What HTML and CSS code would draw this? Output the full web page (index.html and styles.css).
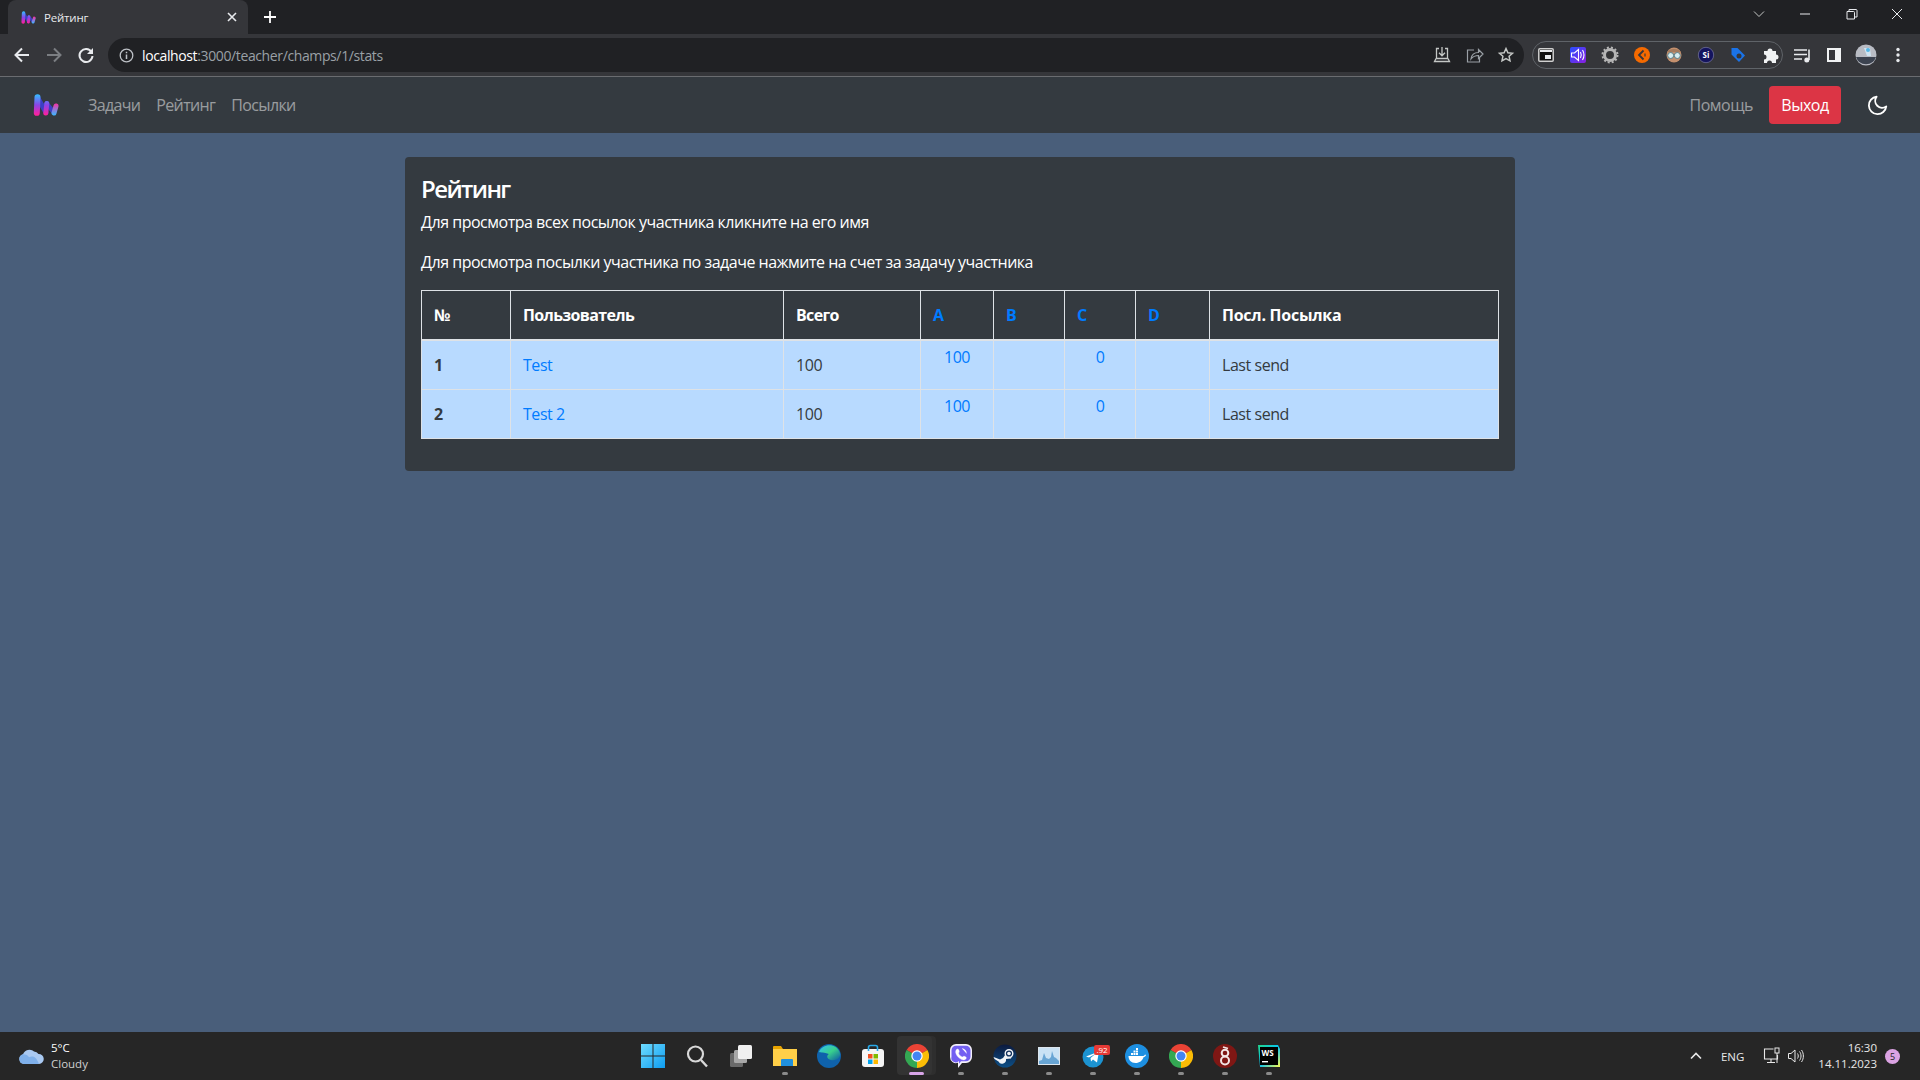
FILE: index.html
```html
<!DOCTYPE html>
<html lang="ru">

<head>
    <meta charset="UTF-8">
    <title>Рейтинг</title>
    <link rel="stylesheet" href="styles.css">
</head>

<body>
    <svg class="defs" width="0" height="0">
        <defs>
            <linearGradient id="barA" gradientUnits="userSpaceOnUse" x1="0" y1="1" x2="0" y2="21">
                <stop offset="0" stop-color="#38b6ff" />
                <stop offset="0.5" stop-color="#8a45e8" />
                <stop offset="1" stop-color="#ff1f9c" />
            </linearGradient>
            <linearGradient id="barB" gradientUnits="userSpaceOnUse" x1="0" y1="9" x2="0" y2="21">
                <stop offset="0" stop-color="#ff2aa0" />
                <stop offset="1" stop-color="#3fb4ff" />
            </linearGradient>
            <linearGradient id="winBlue" x1="0" y1="0" x2="1" y2="1">
                <stop offset="0" stop-color="#6fdcff" />
                <stop offset="1" stop-color="#0d9cf0" />
            </linearGradient>
            <linearGradient id="edgeFill" x1="0" y1="0" x2="1" y2="1">
                <stop offset="0" stop-color="#35c1f1" />
                <stop offset="0.5" stop-color="#38d08c" />
                <stop offset="1" stop-color="#0c59a4" />
            </linearGradient>
            <linearGradient id="wsFill" x1="0" y1="0" x2="1" y2="1">
                <stop offset="0" stop-color="#21d789" />
                <stop offset="0.5" stop-color="#07c3f2" />
                <stop offset="1" stop-color="#fcf84a" />
            </linearGradient>
            <linearGradient id="voiceFill" x1="0" y1="0" x2="1" y2="1">
                <stop offset="0" stop-color="#2a4fff" />
                <stop offset="1" stop-color="#8a1fe0" />
            </linearGradient>
            <linearGradient id="steamFill" x1="0" y1="0" x2="0" y2="1">
                <stop offset="0" stop-color="#0c1a3e" />
                <stop offset="1" stop-color="#0d4f86" />
            </linearGradient>
            <symbol id="logo" viewBox="0 0 26 22">
                <path d="M4.500 3.500L13 18.500" stroke="#3b3fc4" stroke-width="5" stroke-linecap="round" fill="none" />
                <path d="M4.500 3.200L3.800 18.800" stroke="url(#barA)" stroke-width="6" stroke-linecap="round" fill="none" />
                <path d="M13.500 9.500L21 18.500" stroke="#3b3fc4" stroke-width="4.500" stroke-linecap="round" fill="none" />
                <path d="M13.800 9.500L12.800 19" stroke="url(#barA)" stroke-width="5" stroke-linecap="round" fill="none" />
                <path d="M23 12L21 19" stroke="url(#barB)" stroke-width="5" stroke-linecap="round" fill="none" />
            </symbol>
            <symbol id="chrome" viewBox="0 0 24 24">
                <path d="M12 12L1.600 6A12 12 0 0 1 22.400 6z" fill="#ea4335" />
                <path d="M12 12L22.400 6A12 12 0 0 1 12 24z" fill="#fbbc05" />
                <path d="M12 12L12 24A12 12 0 0 1 1.600 6z" fill="#34a853" />
                <circle cx="12" cy="12" r="5.700" fill="#fff" />
                <circle cx="12" cy="12" r="4.500" fill="#4285f4" />
            </symbol>
        </defs>
    </svg>

    <div class="tabstrip">
        <div class="tab">
            <svg class="favicon" width="15" height="13"><use href="#logo" /></svg>
            <span class="tab-title">Рейтинг</span>
            <svg class="tab-close" width="10" height="10" viewBox="0 0 10 10"><path d="M1 1l8 8M9 1l-8 8" stroke="#e8eaed" stroke-width="1.600" /></svg>
        </div>
        <svg class="new-tab" width="12" height="12" viewBox="0 0 12 12"><path d="M6 0v12M0 6h12" stroke="#fff" stroke-width="1.800" /></svg>
        <div class="window-controls">
            <svg width="46" height="12" viewBox="0 0 46 12"><path d="M18 3.500l5 5 5-5" fill="none" stroke="#c4c7c5" stroke-width="1" /></svg>
            <svg width="46" height="12" viewBox="0 0 46 12"><path d="M18 6h10" stroke="#e8eaed" stroke-width="1" /></svg>
            <svg width="46" height="12" viewBox="0 0 46 12"><path d="M19 3.500h6.500a1 1 0 0 1 1 1v6.500h-7.500z M21 3.500v-2h7a1 1 0 0 1 1 1v6.500h-2.500" fill="none" stroke="#e8eaed" stroke-width="1" /></svg>
            <svg width="46" height="12" viewBox="0 0 46 12"><path d="M18 1l10 10M28 1l-10 10" stroke="#e8eaed" stroke-width="1" /></svg>
        </div>
    </div>

    <div class="toolbar">
        <div class="nav-buttons">
            <svg width="32" height="20" viewBox="0 0 32 20"><path d="M23 10H10M16 3.500L9.500 10l6.500 6.500" fill="none" stroke="#e8eaed" stroke-width="2" /></svg>
            <svg width="32" height="20" viewBox="0 0 32 20"><path d="M9 10h13M16 3.500l6.500 6.500-6.500 6.500" fill="none" stroke="#7b7e82" stroke-width="2" /></svg>
            <svg width="32" height="20" viewBox="0 0 32 20"><path d="M21.500 7A6.500 6.500 0 1 0 22.500 11" fill="none" stroke="#e8eaed" stroke-width="2" /><path d="M23 3v6h-6z" fill="#e8eaed" /></svg>
        </div>
        <div class="address">
            <svg class="info" width="15" height="15" viewBox="0 0 15 15"><circle cx="7.500" cy="7.500" r="6.300" fill="none" stroke="#bdc1c6" stroke-width="1.300" /><path d="M7.500 6.500v4.500M7.500 3.800v1.500" stroke="#bdc1c6" stroke-width="1.500" /></svg>
            <span class="url"><span class="host">localhost</span>:3000/teacher/champs/1/stats</span>
            <div class="address-actions">
                <svg width="32" height="20" viewBox="0 0 32 20"><path d="M13 3.500H10.500v10h11v-10H19M16 2v8.500M13 7.800l3 3 3-3" fill="none" stroke="#c4c7c5" stroke-width="1.300" /><path d="M10 13.500l-1.500 3h15l-1.500-3" fill="none" stroke="#c4c7c5" stroke-width="1.300" /></svg>
                <svg width="32" height="20" viewBox="0 0 32 20"><path d="M16 5h-6.500v12h12v-4M13 14c.5-4 3-6.500 7.500-6.500V4.500l4.500 4.500-4.500 4.500v-3c-3 0-5.500 1-7.500 3.500z" fill="none" stroke="#9aa0a6" stroke-width="1.200" /></svg>
                <svg width="32" height="20" viewBox="0 0 32 20"><path d="M16 3.500l1.900 4.200 4.600.5-3.400 3.100.9 4.600-4-2.300-4 2.300.9-4.600-3.400-3.100 4.600-.5z" fill="none" stroke="#c4c7c5" stroke-width="1.500" /></svg>
            </div>
        </div>
        <div class="extensions">
            <svg width="32" height="20" viewBox="0 0 32 20"><rect x="8.800" y="3.800" width="14.400" height="12.400" rx="1" fill="#111" stroke="#d0d0d0" stroke-width="1.500" /><rect x="10" y="5" width="12" height="2" fill="#e8eaed" /><rect x="15" y="10" width="6" height="4" fill="#e8eaed" /></svg>
            <svg width="32" height="20" viewBox="0 0 32 20"><rect x="8" y="2" width="16" height="16" rx="2" fill="url(#voiceFill)" /><path d="M9.500 8v4h3l4 3.500v-11l-4 3.500zM18.500 7c1 2 1 4 0 6M20.500 5c1.800 3 1.800 7 0 10" fill="none" stroke="#fff" stroke-width="1.100" /></svg>
            <svg width="32" height="20" viewBox="0 0 32 20"><circle cx="16" cy="10" r="5.500" fill="none" stroke="#b5b5b5" stroke-width="3" /><circle cx="16" cy="10" r="7.500" fill="none" stroke="#b5b5b5" stroke-width="2" stroke-dasharray="2 2" /><circle cx="16" cy="10" r="2.500" fill="#333" /></svg>
            <svg width="32" height="20" viewBox="0 0 32 20"><circle cx="16" cy="10" r="8" fill="#f56a00" /><path d="M17.500 5.500L13 10l4.500 4.500" fill="none" stroke="#35363a" stroke-width="1.800" /><path d="M19 8.500v3" stroke="#35363a" stroke-width="1.200" /></svg>
            <svg width="32" height="20" viewBox="0 0 32 20"><circle cx="16" cy="10" r="7.500" fill="#c4906e" /><path d="M9 7c2-4 12-4 14 0z" fill="#a57b5d" /><circle cx="12.700" cy="10.500" r="3" fill="#d8eef0" stroke="#5a7f88" /><circle cx="19.300" cy="10.500" r="3" fill="#d8eef0" stroke="#5a7f88" /></svg>
            <svg width="32" height="20" viewBox="0 0 32 20"><circle cx="16" cy="10" r="7.700" fill="#14145e" stroke="#8a8ab0" stroke-width=".6" /><text class="si" x="16" y="13" text-anchor="middle">Si</text></svg>
            <svg width="32" height="20" viewBox="0 0 32 20"><path d="M9.500 3h6l7.500 7.500-6 6.500-7.500-7.500z" fill="#1a73e8" /><circle cx="17" cy="11" r="2.500" fill="#35363a" /></svg>
            <svg width="32" height="20" viewBox="0 0 32 20"><path d="M10 6h3.500a2.500 2.500 0 1 1 5 0H22v3.500a2.500 2.500 0 1 1 0 5V18H18a2.500 2.500 0 1 0-5 0h-3v-3.500a2.500 2.500 0 1 0 0-5z" fill="#f1f3f4" /></svg>
        </div>
        <div class="toolbar-end">
            <svg width="32" height="20" viewBox="0 0 32 20"><path d="M8 5h13M8 9.500h13M8 14h8" stroke="#e8eaed" stroke-width="1.600" /><path d="M23 4.500V15" stroke="#e8eaed" stroke-width="1.600" /><circle cx="20.800" cy="15" r="2.500" fill="#e8eaed" /></svg>
            <svg width="32" height="20" viewBox="0 0 32 20"><path d="M9 3h14v14H9z" fill="#f1f3f4" /><path d="M11 5h6v10h-6z" fill="#35363a" /></svg>
            <svg width="32" height="24" viewBox="0 0 32 24"><circle cx="16" cy="12" r="10.500" fill="#b9bcc4" /><path d="M6 14h20a10.500 10.500 0 0 1-20 0z" fill="#3c4350" /><path d="M14 5h6l1 8h-4z" fill="#cfe4f2" /><circle cx="18" cy="7" r="2" fill="#55b6e6" /></svg>
            <svg width="32" height="20" viewBox="0 0 32 20"><circle cx="16" cy="4.500" r="1.700" fill="#e8eaed" /><circle cx="16" cy="10" r="1.700" fill="#e8eaed" /><circle cx="16" cy="15.500" r="1.700" fill="#e8eaed" /></svg>
        </div>
    </div>

    <nav class="navbar">
        <svg class="brand" width="26" height="22"><use href="#logo" /></svg>
        <a class="nav-link" href="#">Задачи</a>
        <a class="nav-link" href="#">Рейтинг</a>
        <a class="nav-link" href="#">Посылки</a>
        <a class="nav-link nav-help" href="#">Помощь</a>
        <button class="logout">Выход</button>
        <svg class="moon" width="22" height="22" viewBox="0 0 24 24"><path d="M21 13.500A9.500 9.500 0 1 1 10.500 3a7.500 7.500 0 0 0 10.500 10.500z" fill="none" stroke="#fff" stroke-width="2" stroke-linejoin="round" /></svg>
    </nav>

    <main class="page">
        <div class="card">
            <h4>Рейтинг</h4>
            <p>Для просмотра всех посылок участника кликните на его имя</p>
            <p>Для просмотра посылки участника по задаче нажмите на счет за задачу участника</p>
            <table class="rating">
                <colgroup>
                    <col class="c-num">
                    <col class="c-user">
                    <col class="c-total">
                    <col class="c-a">
                    <col class="c-b">
                    <col class="c-c">
                    <col class="c-d">
                    <col class="c-last">
                </colgroup>
                <thead>
                    <tr>
                        <th>№</th>
                        <th>Пользователь</th>
                        <th>Всего</th>
                        <th><a href="#">A</a></th>
                        <th><a href="#">B</a></th>
                        <th><a href="#">C</a></th>
                        <th><a href="#">D</a></th>
                        <th>Посл. Посылка</th>
                    </tr>
                </thead>
                <tbody>
                    <tr>
                        <td class="place">1</td>
                        <td><a href="#">Test</a></td>
                        <td>100</td>
                        <td class="score"><a href="#">100</a></td>
                        <td class="score"></td>
                        <td class="score"><a href="#">0</a></td>
                        <td class="score"></td>
                        <td>Last send</td>
                    </tr>
                    <tr>
                        <td class="place">2</td>
                        <td><a href="#">Test 2</a></td>
                        <td>100</td>
                        <td class="score"><a href="#">100</a></td>
                        <td class="score"></td>
                        <td class="score"><a href="#">0</a></td>
                        <td class="score"></td>
                        <td>Last send</td>
                    </tr>
                </tbody>
            </table>
        </div>
    </main>

    <footer class="taskbar">
        <div class="weather">
            <svg width="26" height="18" viewBox="0 0 26 18"><path d="M6 17a5 5 0 0 1-1-9.800A7 7 0 0 1 16 4.500 5.500 5.500 0 0 1 20.500 7 5 5 0 0 1 21 17z" fill="#a9c9f2" /><path d="M6 17a5 5 0 0 1-1-9.800c3 0 5 1 6 3 3-1.500 7-1.500 10 6.800z" fill="#7fb0ea" /></svg>
            <div class="weather-text">
                <span class="temp">5°C</span>
                <span class="cond">Cloudy</span>
            </div>
        </div>
        <div class="apps">
            <div class="app">
                <svg width="24" height="24" viewBox="0 0 24 24"><path d="M0 0h11.500v11.500H0zM12.500 0H24v11.500H12.500zM0 12.500h11.500V24H0zM12.500 12.500H24V24H12.500z" fill="url(#winBlue)" /></svg>
            </div>
            <div class="app">
                <svg width="24" height="24" viewBox="0 0 24 24"><circle cx="10.500" cy="10" r="7.500" fill="none" stroke="#d8d8d8" stroke-width="2.200" /><path d="M16 16l6 6.500" stroke="#d8d8d8" stroke-width="2.400" /></svg>
            </div>
            <div class="app">
                <svg width="24" height="24" viewBox="0 0 24 24"><rect x="1" y="9" width="13" height="14" rx="1.500" fill="#6a6a6a" /><rect x="5" y="6" width="13" height="13" rx="1.500" fill="#a8a8a8" /><rect x="9" y="1" width="14" height="14" rx="1.500" fill="#f0f0f0" /></svg>
            </div>
            <div class="app running">
                <svg width="24" height="24" viewBox="0 0 24 24"><path d="M0 3a1 1 0 0 1 1-1h7l2 3h-10z" fill="#e9a400" /><path d="M0 5h24v17H0z" fill="#ffcf48" /><path d="M9 15h10a1 1 0 0 1 1 1v6H8v-6a1 1 0 0 1 1-1z" fill="#1f8fdc" /></svg>
            </div>
            <div class="app">
                <svg width="24" height="24" viewBox="0 0 24 24"><circle cx="12" cy="12" r="12" fill="#0f62ab" /><path d="M2 8C5 0 19-2 23 9c1 6-5 8-9 7-4-1-5-4-2-6-5-2-8-1-10-2z" fill="url(#edgeFill)" /></svg>
            </div>
            <div class="app">
                <svg width="24" height="24" viewBox="0 0 24 24"><rect x="1" y="5" width="22" height="18" rx="3" fill="#f5f5f5" /><path d="M7.500 7V3.500a2 2 0 0 1 2-2h5a2 2 0 0 1 2 2V7" fill="none" stroke="#29a9e8" stroke-width="1.600" /><path d="M7 10h4.500v4.500H7z" fill="#f25022" /><path d="M12.500 10H17v4.500h-4.500z" fill="#7fba00" /><path d="M7 15.500h4.500V20H7z" fill="#00a4ef" /><path d="M12.500 15.500H17V20h-4.500z" fill="#ffb900" /></svg>
            </div>
            <div class="app active">
                <svg width="24" height="24"><use href="#chrome" /></svg>
            </div>
            <div class="app running">
                <svg width="24" height="24" viewBox="0 0 24 24"><path d="M7 0h10a6 6 0 0 1 6 6v7a6 6 0 0 1-6 6h-4l-4 5v-5.200A6 6 0 0 1 1 13V6a6 6 0 0 1 6-6z" fill="#f3f0fa" /><path d="M7 1.700h10a4.500 4.500 0 0 1 4.500 4.500v6.500a4.500 4.500 0 0 1-4.500 4.500h-5l-2 2.500v-2.600A4.500 4.500 0 0 1 2.500 12.700V6.200A4.500 4.500 0 0 1 7 1.700z" fill="#7360f2" /><path d="M7.500 5.500c1-1 2-.5 2.500 1s0 2-.5 2.500c.5 2 2 3.500 4 4 .5-.5 1.200-1 2.500-.5s1.700 1.500.8 2.500c-1 1-2.300 1.200-4 .5-3-1.200-5.300-3.800-6-6.500-.3-1.500 0-2.600.7-3.500zM13 4.500c2.500.2 4.500 2 4.500 5" fill="#fff" stroke="#fff" stroke-width=".4" /></svg>
            </div>
            <div class="app running">
                <svg width="24" height="24" viewBox="0 0 24 24"><circle cx="12" cy="12" r="11.500" fill="url(#steamFill)" /><path d="M.5 13L7 15.500l3-1.500 4.500-6.500 5 2-1.500 5-5 .5a4 4 0 0 1-7.500 2.500L1.500 15z" fill="#f2f5f8" /><circle cx="16" cy="9.500" r="3.800" fill="#10305c" stroke="#f2f5f8" stroke-width="1.400" /><circle cx="16" cy="9.500" r="1.800" fill="#f2f5f8" /></svg>
            </div>
            <div class="app running">
                <svg width="24" height="24" viewBox="0 0 24 24"><rect x="1" y="3" width="22" height="18" fill="#dde6ee" /><rect x="2" y="4" width="20" height="16" fill="#c9e2f5" /><path d="M2 20v-3l3-1 2-7 2 5 3 1 2-2 1-6 2 6 2 1 3 3v3z" fill="#68a5d4" /></svg>
            </div>
            <div class="app running">
                <svg width="24" height="24" viewBox="0 0 24 24"><circle cx="12" cy="13" r="10.500" fill="#1c93d1" /><path d="M5 12.500l13-5-2 11-4-3-2 2-.5-3.500 5.500-4.500-7 4z" fill="#fff" /></svg>
                <span class="tg-count">.92</span>
            </div>
            <div class="app running">
                <svg width="24" height="24" viewBox="0 0 24 24"><circle cx="12" cy="12" r="12" fill="#1d8fe1" /><path d="M3.500 12h14c1 0 2-.5 2.500-1.500l1 .5c-.5 1.500-1.500 2-2.500 2.200-1 3.300-4 5.800-8 5.800-4.500 0-7-3-7-7z" fill="#fff" /><path d="M6 9h2v2H6zM8.500 9h2v2h-2zM11 9h2v2h-2zM8.500 6.500h2v2h-2zM11 6.500h2v2h-2zM11 4h2v2h-2z" fill="#fff" /></svg>
            </div>
            <div class="app running">
                <svg width="24" height="24"><use href="#chrome" /></svg>
            </div>
            <div class="app running">
                <svg width="24" height="24" viewBox="0 0 24 24"><circle cx="12" cy="12" r="12" fill="#7f1714" /><circle cx="12" cy="9" r="3.300" fill="none" stroke="#f2e6e5" stroke-width="2" /><circle cx="12" cy="16.500" r="4" fill="none" stroke="#f2e6e5" stroke-width="2" /><path d="M10 3l5 1.500" stroke="#f2e6e5" stroke-width="1.800" /></svg>
            </div>
            <div class="app running">
                <svg width="24" height="24" viewBox="0 0 24 24"><path d="M1 1h20l2 4v18H3z" fill="url(#wsFill)" /><rect x="3" y="3" width="18" height="18" fill="#000" /><text class="ws" x="4.500" y="12">WS</text><rect x="5" y="17" width="6" height="1.400" fill="#fff" /></svg>
            </div>
        </div>
        <div class="tray">
            <svg class="tray-caret" width="12" height="8" viewBox="0 0 12 8"><path d="M1 6.500l5-5 5 5" fill="none" stroke="#e8e8e8" stroke-width="1.600" /></svg>
            <span class="lang">ENG</span>
            <svg class="tray-net" width="18" height="18" viewBox="0 0 18 18"><path d="M10.500 2H1.500v10h13V8M4 15.500h8M8 12v3.500" fill="none" stroke="#e8e8e8" stroke-width="1.100" /><rect x="12" y="1" width="4" height="5" fill="none" stroke="#e8e8e8" /><path d="M14 6v10" stroke="#e8e8e8" /></svg>
            <svg class="tray-sound" width="18" height="18" viewBox="0 0 18 18"><path d="M1.500 6.500v5H4l4 3.500V3L4 6.500zM10.500 6.500c1 1.500 1 3.500 0 5M12.500 4.500c2 2.500 2 6.500 0 9M14.500 3c2.500 3.500 2.500 8.500 0 12" fill="none" stroke="#e8e8e8" stroke-width="1" /></svg>
            <div class="clock">
                <span>16:30</span>
                <span>14.11.2023</span>
            </div>
            <span class="notify">5</span>
        </div>
    </footer>
</body>

</html>
```

FILE: styles.css
```css
* {
    box-sizing: border-box;
}

html,
body {
    height: 100%;
}

body {
    margin: 0;
    font-family: "Open Sans", "Noto Sans", Arial, sans-serif;
    font-size: 16px;
    color: #fff;
    background-color: #495e7a;
    display: flex;
    flex-direction: column;
    overflow: hidden;
}

svg {
    display: block;
    flex: none;
}

.defs {
    position: absolute;
}

/* browser chrome */

.tabstrip {
    height: 34px;
    background: #202124;
    display: flex;
    align-items: center;
    padding-left: 8px;
}

.tab {
    width: 240px;
    height: 34px;
    background: #35363a;
    border-radius: 8px 8px 0 0;
    display: flex;
    align-items: center;
    padding: 0 11px 0 13px;
}

.tab-title {
    margin-left: 8px;
    font-size: 11.5px;
    letter-spacing: -0.2px;
    color: #e8eaed;
    flex: 1;
}

.new-tab {
    margin-left: 16px;
}

.window-controls {
    margin-left: auto;
    display: flex;
    align-items: center;
    margin-top: -6px;
}

.toolbar {
    height: 43px;
    background: #35363a;
    border-bottom: 1px solid #6a6c70;
    display: flex;
    align-items: center;
    padding: 0 6px;
}

.nav-buttons {
    display: flex;
    margin-right: 6px;
}

.address {
    width: 1416px;
    height: 34px;
    background: #202124;
    border-radius: 17px;
    display: flex;
    align-items: center;
    padding-left: 11px;
}

.url {
    margin-left: 8px;
    font-size: 14px;
    letter-spacing: -0.38px;
    color: #9aa0a6;
}

.host {
    color: #fff;
}

.address-actions {
    margin-left: auto;
    display: flex;
    padding-right: 2px;
}

.extensions {
    margin-left: 8px;
    width: 251px;
    height: 28px;
    border: 1px solid #5f6368;
    border-radius: 14px;
    display: flex;
    align-items: center;
    justify-content: center;
}

.toolbar-end {
    display: flex;
    align-items: center;
    margin-left: 3px;
}

.si {
    font-size: 8px;
    font-weight: 700;
    fill: #fff;
}

/* site navbar */

.navbar {
    height: 56px;
    background: #343a40;
    display: flex;
    align-items: center;
    padding: 0 31px 0 33px;
}

.brand {
    margin-right: 21px;
}

.nav-link {
    padding: 0 8px;
    color: rgba(255, 255, 255, 0.5);
    text-decoration: none;
    letter-spacing: -0.65px;
}

.nav-help {
    margin-left: auto;
    letter-spacing: -0.5px;
}

.logout {
    width: 72px;
    height: 38px;
    margin-left: 8px;
    background: #dc3545;
    color: #fff;
    border: none;
    border-radius: 4px;
    font-family: inherit;
    font-size: 16px;
    letter-spacing: -0.5px;
}

.moon {
    margin-left: 26px;
}

/* page */

.page {
    flex: 1;
    padding-top: 24px;
}

.card {
    width: 1110px;
    margin: 0 auto;
    padding: 16px;
    background: #343a40;
    border-radius: 4px;
}

.card h4 {
    margin: 2px 0 6px;
    font-size: 24px;
    line-height: 1.2;
    font-weight: 600;
    letter-spacing: -1.6px;
}

.card p {
    margin: 0 0 16px;
    line-height: 24px;
    letter-spacing: -0.48px;
}

.rating {
    width: 1077px;
    margin-bottom: 16px;
    border-collapse: collapse;
    table-layout: fixed;
    letter-spacing: -0.45px;
}

.c-num { width: 89px; }
.c-user { width: 273px; }
.c-total { width: 137px; }
.c-a { width: 73px; }
.c-b { width: 71px; }
.c-c { width: 71px; }
.c-d { width: 74px; }
.c-last { width: 289px; }

.rating th,
.rating td {
    padding: 12px;
    line-height: 24px;
    text-align: left;
    border: 1px solid #dee2e6;
}

.rating th {
    height: 50px;
    border-bottom-width: 2px;
    font-weight: 700;
    letter-spacing: -0.65px;
}

.rating th:last-child {
    letter-spacing: -0.25px;
}

.rating td {
    height: 49px;
    background: #b8daff;
    color: #343a40;
}

.rating a {
    color: #007bff;
    text-decoration: none;
}

.rating td.place {
    font-weight: 700;
}

.rating td.score {
    padding-top: 4px;
    vertical-align: top;
    text-align: center;
}

/* windows taskbar */

.taskbar {
    height: 48px;
    background: #262626;
    display: grid;
    grid-template-columns: 1fr auto 1fr;
    align-items: center;
}

.weather {
    display: flex;
    align-items: center;
    padding-left: 18px;
    gap: 7px;
}

.weather-text,
.clock {
    display: flex;
    flex-direction: column;
    font-size: 11.5px;
    line-height: 16px;
    color: #e8e8e8;
}

.temp {
    color: #fff;
}

.cond {
    color: #d0d0d0;
}

.apps {
    display: flex;
    padding-left: 2px;
}

.app {
    position: relative;
    width: 44px;
    height: 44px;
    display: flex;
    align-items: center;
    justify-content: center;
}

.app svg {
    position: relative;
}

.app.active::before {
    content: "";
    position: absolute;
    left: 2px;
    top: 2px;
    width: 35px;
    height: 39px;
    background: #333;
    border-radius: 4px;
    box-shadow: 4px 0 0 #2e2e2e;
}

.app.running::after,
.app.active::after {
    content: "";
    position: absolute;
    left: 19px;
    bottom: 3px;
    width: 6px;
    height: 3px;
    border-radius: 2px;
    background: #8a8a8a;
}

.app.active::after {
    left: 14px;
    width: 15px;
    background: #d8a5e8;
}

.tg-count {
    position: absolute;
    top: 11px;
    left: 23px;
    width: 16px;
    height: 10px;
    font-size: 8px;
    line-height: 10px;
    text-align: center;
    background: #e53935;
    color: #fff;
    border-radius: 2px;
}

.ws {
    font-size: 8px;
    font-weight: 700;
    fill: #fff;
}

.tray {
    display: flex;
    align-items: center;
    justify-content: flex-end;
    padding-right: 20px;
}

.tray-caret {
    margin-right: 19px;
}

.lang {
    font-size: 11.5px;
    color: #e8e8e8;
    margin-right: 19px;
}

.tray-net {
    margin-right: 6px;
}

.clock {
    margin-left: 13px;
    align-items: flex-end;
}

.notify {
    width: 15px;
    height: 15px;
    margin-left: 8px;
    border-radius: 50%;
    background: #dba3e3;
    color: #222;
    font-size: 9px;
    line-height: 15px;
    text-align: center;
}
```
